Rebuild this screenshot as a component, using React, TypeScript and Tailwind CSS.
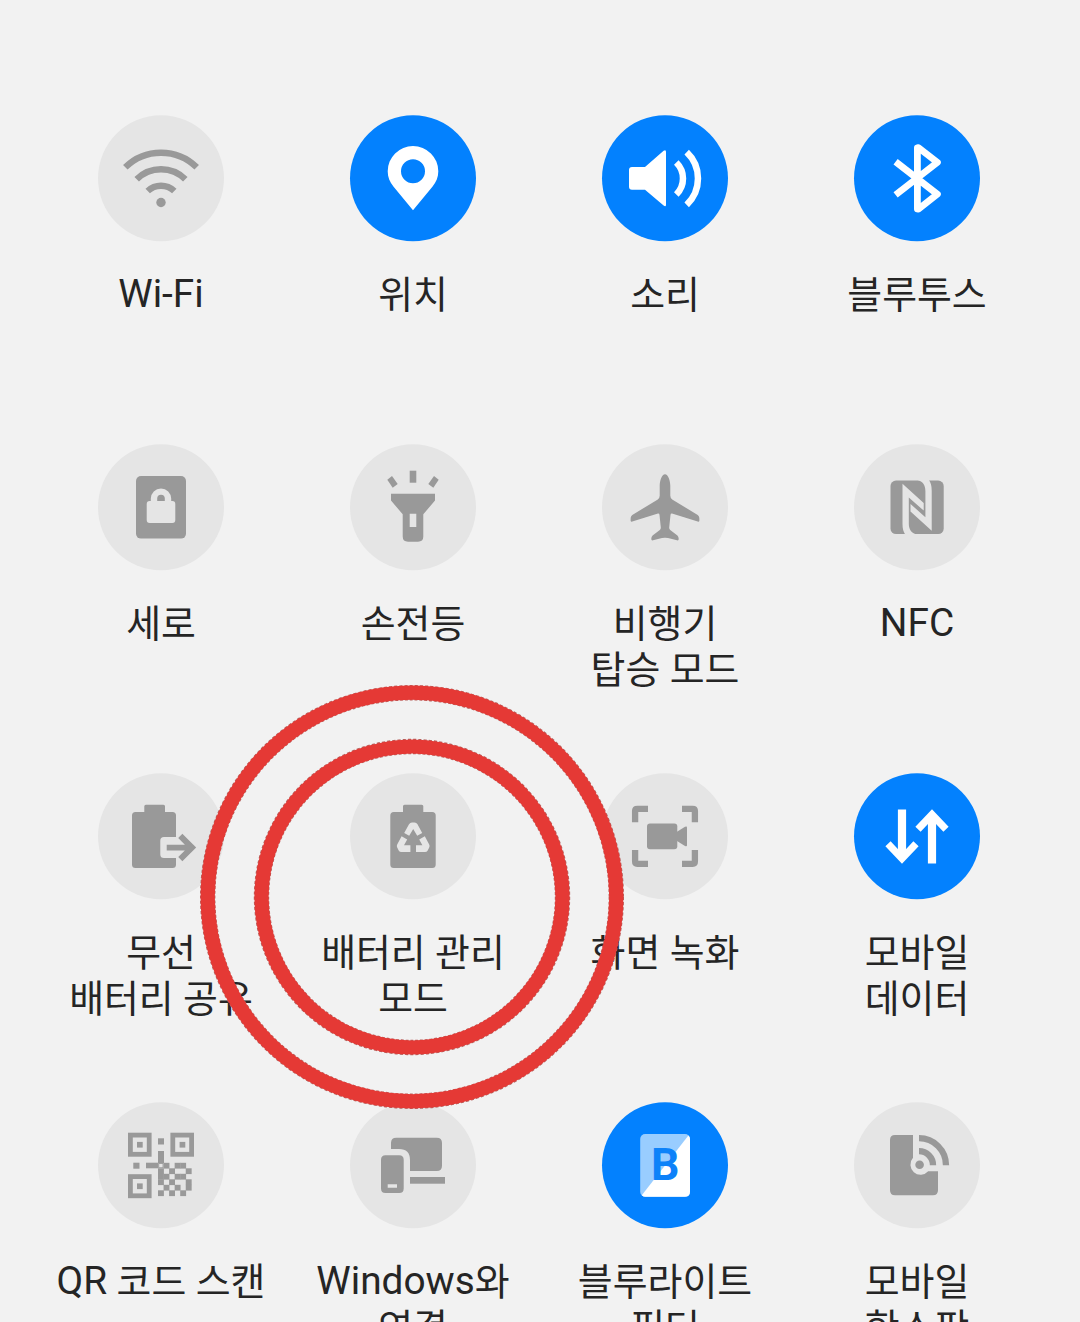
import React from 'react'
import clsx from 'clsx'

interface Tile {
  key: string
  lines: string[]
  active?: boolean
  icon: React.ReactNode
}

const OFF_BG = '#e5e5e5'
const ACTIVE_BG = '#0381fe'

// Dark modules in the lower right part of the QR glyph
const qrModules = [
  '.X.XX.',
  'X.X..X',
  'XX.XX.',
  'X.X..X',
  '.X.X.X',
  'X.X.X.',
]

const WifiIcon = () => (
  <>
    <g fill="none" stroke="currentColor" strokeWidth={6.4}>
      <path d="M27.3 52.3A50.9 50.9 0 0 1 98.7 52.3" />
      <path d="M38.7 64.3A34.5 34.5 0 0 1 87.3 64.3" />
      <path d="M49.7 76A19.3 19.3 0 0 1 76.3 76" />
    </g>
    <circle cx={63} cy={87.5} r={4.7} />
  </>
)

const LocationIcon = () => (
  <path
    fillRule="evenodd"
    d="M63 31A25.3 25.3 0 0 0 37.7 56.3C37.7 62.5 39.8 67 43.4 71.6L63 95.3L82.6 71.6C86.2 67 88.3 62.5 88.3 56.3A25.3 25.3 0 0 0 63 31ZM63 44.3a12 12 0 1 1 0 24a12 12 0 1 1 0-24Z"
  />
)

const SoundIcon = () => (
  <>
    <path d="M30 52H43L61.6 35.8Q64 34 64 37V89.5Q64 92.5 61.6 90.6L43 74.7H30Q27 74.7 27 71.7V55Q27 52 30 52Z" />
    <g fill="none" stroke="currentColor" strokeWidth={6.5}>
      <path d="M74.3 47.5A22.5 22.5 0 0 1 74.3 79.5" />
      <path d="M84.7 37.2A36.3 36.3 0 0 1 84.7 89.8" />
    </g>
  </>
)

const BluetoothIcon = () => (
  <path
    d="M41.6 46.8L83.4 79.2L64.4 94.2L63.4 94V32.8L64.4 32.6L83.4 47.4L41.6 79.9"
    fill="none"
    stroke="currentColor"
    strokeWidth={6.8}
    strokeLinejoin="round"
  />
)

const LockIcon = () => (
  <>
    <rect x={38} y={32} width={50} height={62.6} rx={5} />
    <rect x={48.7} y={57} width={28.6} height={22} rx={3} fill={OFF_BG} />
    <path d="M56 59V54.6a7 7 0 0 1 14 0V59" fill="none" stroke={OFF_BG} strokeWidth={6.4} />
  </>
)

const FlashlightIcon = () => (
  <>
    <rect x={59.7} y={26.7} width={6.6} height={12} />
    <path d="M37.3 35.7L42 32L47.7 40L42.7 43.8Z" />
    <path d="M88.7 35.7L84 32L78.3 40L83.3 43.8Z" />
    <path
      fillRule="evenodd"
      d="M41 49.7H85V56.5L73.3 70.3V92.5Q73.3 97.7 68 97.7H58Q52.7 97.7 52.7 92.5V70.3L41 56.5ZM59.7 69.7V83H66.3V69.7Z"
    />
  </>
)

const AirplaneIcon = () => (
  <path d="M63 30.3C60 30.3 57.7 36.3 57.7 42V51.8Q57.7 54 55.8 55.4L30.3 71Q28.9 72 28.7 73.8L28.6 76.5Q28.7 78 30.3 77.6L56 69.6Q57.4 69.4 57.5 71L58.8 83.6Q58.9 85 57.8 86L50.6 91.4Q49.3 92.5 49.3 94.8Q49.2 96.8 51 96.3C55 95.3 59 93.8 63 93.8C67 93.8 71 95.3 75 96.3Q76.8 96.8 76.7 94.8Q76.7 92.5 75.4 91.4L68.2 86Q67.1 85 67.2 83.6L68.5 71Q68.6 69.4 70 69.6L95.7 77.6Q97.3 78 97.4 76.5L97.3 73.8Q97.1 72 95.7 71L70.2 55.4Q68.3 54 68.3 51.8V42C68.3 36.3 66 30.3 63 30.3Z" />
)

const NfcIcon = () => {
  const stroke = 'M48.5 39.8L69.7 59V66.6L54.8 53.4V79.5C54.8 85.5 57.5 89 62.5 90.5H51.2C49.4 87.5 48.5 85 48.5 80Z'
  return (
    <>
      <rect x={36.5} y={36.6} width={53.2} height={53.4} rx={5.5} />
      <path d={stroke} fill={OFF_BG} />
      <path d={stroke} fill={OFF_BG} transform="rotate(180 63.1 63.3)" />
    </>
  )
}

const BatteryShareIcon = () => (
  <>
    <path d="M46.3 39V33.2Q46.3 31.7 47.8 31.7H65.5Q67 31.7 67 33.2V39H74.5Q78 39 78 42.5V64H66Q62.3 64 62.3 67.7V81.5Q62.3 85 66 85H78V91.5Q78 95 74.5 95H37.5Q34 95 34 91.5V42.5Q34 39 37.5 39Z" />
    <path d="M68.7 74.6H93M82.3 62.8L94 74.6L82.3 86.2" fill="none" stroke="currentColor" strokeWidth={5.9} />
  </>
)

const BatteryModeIcon = () => (
  <>
    <path d="M53 39V33.2Q53 31.7 54.5 31.7H71.8Q73.3 31.7 73.3 33.2V39H82.2Q85.7 39 85.7 42.5V91.5Q85.7 95 82.2 95H43.8Q40.3 95 40.3 91.5V42.5Q40.3 39 43.8 39Z" />
    <g fill={OFF_BG}>
      <path d="M54.2 60L59 51.2Q60 49.5 62 49.5H64.5Q66.5 49.5 67.5 51.2L72.2 60L67.2 62.8L63.2 56L59.2 62.8Z" />
      <path d="M51.6 63.3L57.2 66.4L54 72.2H60.4V79H51.4Q49.6 79 48.7 77.5L47.2 74.6Q46.4 73 47.2 71.4Z" />
      <path d="M74.8 63.3L69.2 66.4L72.4 72.2H66V79H75Q76.8 79 77.7 77.5L79.2 74.6Q80 73 79.2 71.4Z" />
    </g>
  </>
)

const ScreenRecordIcon = () => (
  <>
    <path
      d="M33.1 49.3V38Q33.1 35.8 35.3 35.8H46M80 35.8H90.7Q92.9 35.8 92.9 38V49.3M92.9 77V88.6Q92.9 90.8 90.7 90.8H80M46 90.8H35.3Q33.1 90.8 33.1 88.6V77"
      fill="none"
      stroke="currentColor"
      strokeWidth={6.3}
    />
    <rect x={45} y={50.4} width={30.3} height={25.8} rx={3} />
    <path d="M75 58.8L83 53.8Q85 52.8 85 54.5V72.3Q85 74 83 73L75 68Z" />
  </>
)

const MobileDataIcon = () => (
  <g fill="none" stroke="currentColor">
    <path d="M48 36.6V84M78 90.4V43" strokeWidth={8.2} />
    <path d="M34 70.8L48 85.6L62 70.8M64 56.3L78 41.5L92 56.3" strokeWidth={7.2} />
  </g>
)

const QrIcon = () => (
  <>
    <g fill="none" stroke="currentColor" strokeWidth={4.8}>
      <rect x={32.4} y={33.1} width={18.8} height={19.2} />
      <rect x={74.8} y={33.1} width={18.8} height={19.2} />
      <rect x={32.4} y={74.6} width={18.8} height={19.2} />
    </g>
    <rect x={39} y={39.9} width={5.7} height={5.7} />
    <rect x={81.6} y={39.9} width={5.7} height={5.7} />
    <rect x={39} y={81.4} width={5.7} height={5.7} />
    <rect x={60} y={36.3} width={6} height={6.2} />
    <rect x={35.3} y={60.7} width={6.2} height={6} />
    <rect x={60} y={49} width={6} height={12} />
    <rect x={48} y={60.7} width={12} height={5.6} />
    <rect x={60.7} y={61.4} width={4.4} height={4.4} fill="none" stroke="currentColor" strokeWidth={1} />
    {qrModules.map((row, y) =>
      row.split('').map((cell, x) =>
        cell === 'X' ? (
          <rect key={`${x}-${y}`} x={60 + x * 5.55} y={60.8 + y * 5.5} width={5.9} height={5.8} />
        ) : null
      )
    )}
  </>
)

const WindowsLinkIcon = () => (
  <>
    <path d="M41 47V41Q41 35.7 46.3 35.7H86.7Q92 35.7 92 41V63.7Q92 69 86.7 69H60V58Q60 47 49 47Z" />
    <rect x={60} y={75} width={35} height={6.7} />
    <path
      fillRule="evenodd"
      d="M35.5 53.3H49.2Q53.7 53.3 53.7 57.8V86.5Q53.7 91 49.2 91H35.5Q31 91 31 86.5V57.8Q31 53.3 35.5 53.3ZM37.7 82.2V85.8H47V82.2Z"
    />
  </>
)

const BlueLightIcon = () => (
  <>
    <rect x={38.2} y={32} width={49.8} height={62.7} rx={5} fill="#99cdff" />
    <path d="M86.4 33.4Q88 34.8 88 37V89.7Q88 94.7 83 94.7H43.2Q41.2 94.7 39.8 93.2Z" />
    <text x={49} y={77.8} fontSize={44.5} fontWeight={700} fill="#0d82f9" className="font-[Roboto]">
      B
    </text>
  </>
)

const HotspotIcon = () => (
  <>
    <path d="M41 33H59V55.8A10 10 0 1 0 74.2 69.3H84V88.3Q84 93.3 79 93.3H41Q36 93.3 36 88.3V38Q36 33 41 33Z" />
    <circle cx={65.6} cy={62.8} r={4.3} />
    <g fill="none" stroke="currentColor" strokeWidth={6.3}>
      <path d="M65 49.2A14 14 0 0 1 79 63.2" />
      <path d="M65 36.2A27 27 0 0 1 92 63.2" />
    </g>
  </>
)

const tiles: Tile[] = [
  { key: 'wifi', lines: ['Wi-Fi'], icon: <WifiIcon /> },
  { key: 'location', lines: ['위치'], active: true, icon: <LocationIcon /> },
  { key: 'sound', lines: ['소리'], active: true, icon: <SoundIcon /> },
  { key: 'bluetooth', lines: ['블루투스'], active: true, icon: <BluetoothIcon /> },
  { key: 'portrait', lines: ['세로'], icon: <LockIcon /> },
  { key: 'flashlight', lines: ['손전등'], icon: <FlashlightIcon /> },
  { key: 'airplane', lines: ['비행기', '탑승 모드'], icon: <AirplaneIcon /> },
  { key: 'nfc', lines: ['NFC'], icon: <NfcIcon /> },
  { key: 'battery-share', lines: ['무선', '배터리 공유'], icon: <BatteryShareIcon /> },
  { key: 'battery-mode', lines: ['배터리 관리', '모드'], icon: <BatteryModeIcon /> },
  { key: 'screen-record', lines: ['화면 녹화'], icon: <ScreenRecordIcon /> },
  { key: 'mobile-data', lines: ['모바일', '데이터'], active: true, icon: <MobileDataIcon /> },
  { key: 'qr', lines: ['QR 코드 스캔'], icon: <QrIcon /> },
  { key: 'windows', lines: ['Windows와', '연결'], icon: <WindowsLinkIcon /> },
  { key: 'blue-light', lines: ['블루라이트', '필터'], active: true, icon: <BlueLightIcon /> },
  { key: 'hotspot', lines: ['모바일', '핫스팟'], icon: <HotspotIcon /> },
]

// Hangul is set a touch smaller and lower than Latin so both look the same height
const Label: React.FC<{ text: string }> = ({ text }) => {
  const latin = text.match(/^[A-Za-z-]+/)?.[0] ?? ''
  const hangul = text.slice(latin.length)

  return (
    <span className="flex h-[46px] whitespace-pre">
      {latin && <span className="text-[38.8px]">{latin}</span>}
      {hangul && <span className="translate-y-px text-[37.9px]">{hangul}</span>}
    </span>
  )
}

const QuickTile: React.FC<{ tile: Tile }> = ({ tile }) => (
  <button className="flex flex-col items-center justify-start">
    <svg
      viewBox="0 0 126 126"
      fill="currentColor"
      className={clsx('size-[126px] shrink-0', tile.active ? 'text-white' : 'text-[#999999]')}
    >
      <circle cx={63} cy={63.3} r={63} fill={tile.active ? ACTIVE_BG : OFF_BG} />
      {tile.icon}
    </svg>
    <span className="mt-[30px] flex flex-col items-center leading-[46px] text-[#252525]">
      {tile.lines.map((line) => (
        <Label key={line} text={line} />
      ))}
    </span>
  </button>
)

export default function App() {
  return (
    <div className="relative h-[1322px] w-[1080px] overflow-hidden bg-[#f2f2f2] font-[Roboto,'Noto_Sans_CJK_KR',sans-serif]">
      <div className="grid auto-rows-[329px] grid-cols-[repeat(4,252px)] pt-[115px] pl-[35px] [&_svg]:overflow-visible">
        {tiles.map((tile) => (
          <QuickTile key={tile.key} tile={tile} />
        ))}
      </div>

      {/* Highlight rings around the battery mode tile */}
      <svg viewBox="0 0 430 430" fill="none" className="pointer-events-none absolute top-[681.5px] left-[197px] size-[430px]">
        <g stroke="#b5625f" strokeWidth={15.4} strokeDasharray="3 2">
          <circle cx={215} cy={215} r={204.3} />
          <circle cx={215} cy={215} r={150.5} />
        </g>
        <g stroke="#e53935" strokeWidth={14.2}>
          <circle cx={215} cy={215} r={204.3} />
          <circle cx={215} cy={215} r={150.5} />
        </g>
      </svg>
    </div>
  )
}
